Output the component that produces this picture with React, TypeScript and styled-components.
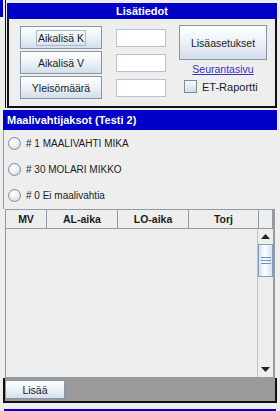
import React from 'react';
import styled, { createGlobalStyle } from 'styled-components';

const BLUE = '#0000c8';

const GlobalStyle = createGlobalStyle`
    body {
        margin: 0;
        background: #eeeeee;
        font-family: "Liberation Sans", Arial, sans-serif;
        color: #1c1c1c;
    }
`;

const Page = styled.div`
    width: 280px;
    height: 411px;
    overflow: hidden;
    display: flex;
    flex-direction: column;
    background: #eeeeee;
`;

const TopRow = styled.div`
    display: flex;
    height: 108px;
`;

const Stub = styled.div`
    width: 5px;
    height: 108px;
    border-right: 1px solid #111;
    margin-right: 1px;
`;

const StubHeader = styled.div`
    width: 3px;
    height: 17px;
    background: ${BLUE};
`;

const Panel = styled.section<{ $width: number; $left?: number; $top: number }>`
    width: ${(p) => p.$width}px;
    margin-left: ${(p) => p.$left ?? 0}px;
    margin-top: ${(p) => p.$top}px;
    display: flex;
    flex-direction: column;
`;

const PanelHeader = styled.div<{ $height: number; $center?: boolean }>`
    height: ${(p) => p.$height}px;
    background: ${BLUE};
    color: #fff;
    font-weight: bold;
    font-size: 11px;
    display: flex;
    align-items: center;
    justify-content: ${(p) => (p.$center ? 'center' : 'flex-start')};
    padding-left: ${(p) => (p.$center ? 0 : 4)}px;
`;

const TopBody = styled.div`
    height: 89px;
    box-sizing: border-box;
    border: 2px solid #111;
    border-top: none;
    display: flex;
    padding: 7px 0 0 11px;
`;

const Column = styled.div<{ $gap: number; $top?: number; $left?: number }>`
    display: flex;
    flex-direction: column;
    gap: ${(p) => p.$gap}px;
    margin-top: ${(p) => p.$top ?? 0}px;
    margin-left: ${(p) => p.$left ?? 0}px;
`;

const Button = styled.button<{ $w: number; $h: number }>`
    width: ${(p) => p.$w}px;
    height: ${(p) => p.$h}px;
    padding: 0;
    border: 1px solid #8696a6;
    border-radius: 0;
    background: linear-gradient(#ffffff 0%, #eef3f8 45%, #d4dfea 100%);
    font-family: "Liberation Sans", Arial, sans-serif;
    font-size: 10.5px;
    color: #1c1c1c;
    display: flex;
    align-items: center;
    justify-content: center;
    box-sizing: border-box;
`;

const FocusLabel = styled.span`
    border: 1px solid #a8b8c8;
    padding: 1px 1px;
`;

const Field = styled.div`
    width: 50px;
    height: 18px;
    box-sizing: border-box;
    border: 1px solid #b4c2d2;
    background: #fff;
`;

const LinkText = styled.a`
    color: #3b2fc4;
    text-decoration: underline;
    font-size: 10.5px;
    text-align: center;
    margin-top: 3px;
`;

const CheckRow = styled.label`
    display: flex;
    align-items: center;
    gap: 5px;
    margin-top: 5px;
    padding-left: 5px;
    font-size: 11px;
`;

const CheckBox = styled.span`
    width: 13px;
    height: 13px;
    box-sizing: border-box;
    border: 1px solid #7d8b99;
    background: linear-gradient(#f6f9fc, #d2dde8);
`;

const RadioArea = styled.div`
    height: 79px;
    display: flex;
    flex-direction: column;
    border-left: 1px solid #8e9aa6;
    padding-left: 4px;
`;

const RadioRow = styled.div`
    height: 26px;
    display: flex;
    align-items: center;
    gap: 5px;
    font-size: 10px;
`;

const RadioDot = styled.span`
    width: 13px;
    height: 13px;
    box-sizing: border-box;
    border-radius: 50%;
    border: 1px solid #7d8b99;
    background: radial-gradient(circle at 40% 35%, #ffffff 0%, #e6edf4 50%, #c6d3e0 100%);
`;

const Table = styled.div`
    margin-left: 2px;
    width: 270px;
    height: 169px;
    display: flex;
    flex-direction: column;
    border-left: 1px solid #8e9aa6;
    border-bottom: 1px solid #8e9aa6;
    border-right: 2px solid #9a9a9a;
    box-sizing: border-box;
`;

const HeaderRow = styled.div`
    display: grid;
    grid-template-columns: 41px 71px 71px 70px 1fr;
    height: 20px;
`;

const HeaderCell = styled.div`
    border-right: 1px solid #8e9aa6;
    border-bottom: 1px solid #8e9aa6;
    border-top: 1px solid #8e9aa6;
    font-weight: bold;
    font-size: 10.5px;
    display: flex;
    align-items: center;
    justify-content: center;
`;

const TableBody = styled.div`
    flex: 1;
    display: flex;
`;

const Rows = styled.div`
    flex: 1;
`;

const ScrollBar = styled.div`
    width: 16px;
    display: flex;
    flex-direction: column;
    border-left: 1px solid #b8c4d0;
    box-sizing: border-box;
`;

const ArrowButton = styled.div`
    height: 15px;
    display: flex;
    align-items: center;
    justify-content: center;
    background: #eeeeee;
`;

const Thumb = styled.div`
    height: 33px;
    box-sizing: border-box;
    border: 1px solid #7e9cc8;
    background: linear-gradient(90deg, #d6e2f0, #ffffff 45%, #d6e2f0);
    display: flex;
    flex-direction: column;
    align-items: center;
    justify-content: center;
    gap: 2px;
`;

const Grip = styled.span`
    width: 10px;
    height: 1px;
    background: #6f8fbf;
`;

const Track = styled.div`
    flex: 1;
`;

const BottomBar = styled.div`
    height: 25px;
    background: #9a9a9a;
    border: 2px solid #111;
    border-top: none;
    box-sizing: border-box;
    padding-top: 2px;
`;

const BlueLine = styled.div`
    margin: 6px 0 0 4px;
    width: 272px;
    height: 3px;
    background: ${BLUE};
`;

const Arrow = ({ up }: { up?: boolean }) => (
    <svg width="9" height="5" viewBox="0 0 9 5">
        <path d={up ? 'M0 5 L4.5 0 L9 5 Z' : 'M0 0 L9 0 L4.5 5 Z'} fill="#222" />
    </svg>
);

const goalies = ['# 1 MAALIVAHTI MIKA', '# 30 MOLARI MIKKO', '# 0 Ei maalivahtia'];
const columns = ['MV', 'AL-aika', 'LO-aika', 'Torj', ''];

const App: React.FC = () => {
    return (
        <Page>
            <GlobalStyle />
            <TopRow>
                <Stub>
                    <StubHeader />
                </Stub>
                <Panel $width={270} $top={3}>
                    <PanelHeader $height={16} $center>
                        Lisätiedot
                    </PanelHeader>
                    <TopBody>
                        <Column $gap={2}>
                            <Button $w={82} $h={23}>
                                <FocusLabel>Aikalisä K</FocusLabel>
                            </Button>
                            <Button $w={82} $h={23}>
                                Aikalisä V
                            </Button>
                            <Button $w={82} $h={23}>
                                Yleisömäärä
                            </Button>
                        </Column>
                        <Column $gap={7} $top={3} $left={14}>
                            <Field />
                            <Field />
                            <Field />
                        </Column>
                        <Column $gap={0} $top={-1} $left={13}>
                            <Button $w={88} $h={35}>
                                Lisäasetukset
                            </Button>
                            <LinkText href="#">Seurantasivu</LinkText>
                            <CheckRow>
                                <CheckBox />
                                ET-Raportti
                            </CheckRow>
                        </Column>
                    </TopBody>
                </Panel>
            </TopRow>
            <Panel $width={274} $left={3} $top={2}>
                <PanelHeader $height={20}>Maalivahtijaksot (Testi 2)</PanelHeader>
                <RadioArea>
                    {goalies.map((g) => (
                        <RadioRow key={g}>
                            <RadioDot />
                            {g}
                        </RadioRow>
                    ))}
                </RadioArea>
                <Table>
                    <HeaderRow>
                        {columns.map((c, i) => (
                            <HeaderCell key={i}>{c}</HeaderCell>
                        ))}
                    </HeaderRow>
                    <TableBody>
                        <Rows />
                        <ScrollBar>
                            <ArrowButton>
                                <Arrow up />
                            </ArrowButton>
                            <Thumb>
                                <Grip />
                                <Grip />
                                <Grip />
                            </Thumb>
                            <Track />
                            <ArrowButton>
                                <Arrow />
                            </ArrowButton>
                        </ScrollBar>
                    </TableBody>
                </Table>
                <BottomBar>
                    <Button $w={60} $h={19}>
                        Lisää
                    </Button>
                </BottomBar>
            </Panel>
            <BlueLine />
        </Page>
    );
};

export default App;
